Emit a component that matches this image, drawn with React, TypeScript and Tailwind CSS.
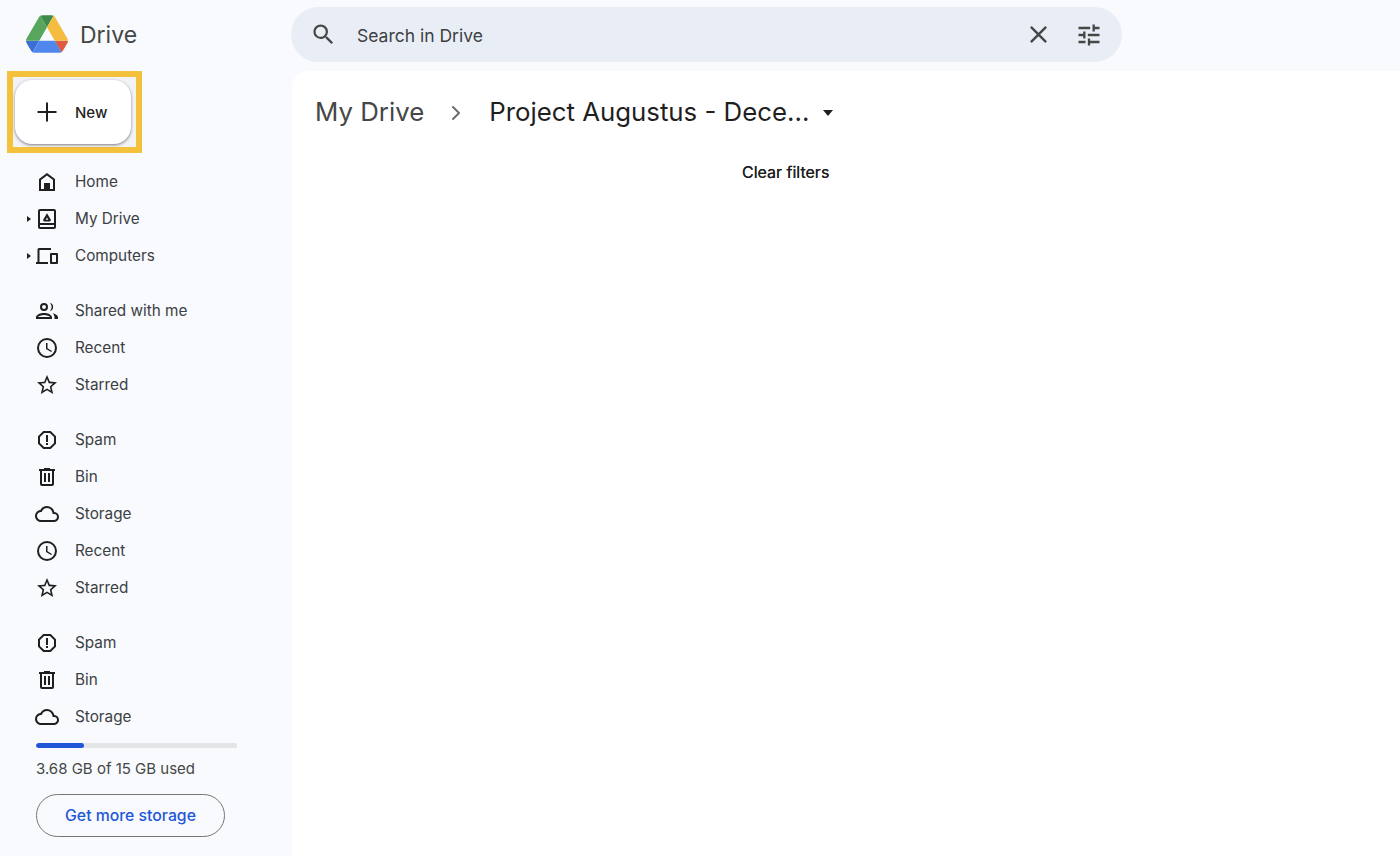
import React from 'react';
import { Plus, ChevronRight } from 'lucide-react';

const DriveLogo = () => (
  <svg viewBox="0 0 87.3 78" className="w-[42px] h-[38px]">
    <path d="m6.6 66.85 3.85 6.65c.8 1.4 1.95 2.5 3.3 3.3l13.75-23.8h-27.5c0 1.55.4 3.1 1.2 4.5z" fill="#3b6fd4" />
    <path d="m43.65 25-13.75-23.8c-1.35.8-2.5 1.9-3.3 3.3l-25.4 44a9.06 9.06 0 0 0 -1.2 4.5h27.5z" fill="#58a65c" />
    <path d="m73.55 76.8c1.35-.8 2.5-1.9 3.3-3.3l1.6-2.75 7.65-13.25c.8-1.4 1.2-2.95 1.2-4.5h-27.502l5.852 11.5z" fill="#df5a42" />
    <path d="m43.65 25 13.75-23.8c-1.35-.8-2.9-1.2-4.5-1.2h-18.5c-1.6 0-3.15.45-4.5 1.2z" fill="#3d8a4b" />
    <path d="m59.8 53h-32.3l-13.75 23.8c1.35.8 2.9 1.2 4.5 1.2h50.8c1.6 0 3.15-.45 4.5-1.2z" fill="#4f87ec" />
    <path d="m73.4 26.5-12.7-22c-.8-1.4-1.95-2.5-3.3-3.3l-13.75 23.8 16.15 28h27.45c0-1.55-.4-3.1-1.2-4.5z" fill="#f4bd41" />
  </svg>
);

const iconClass = 'w-6 h-6 fill-[#1f1f1f]';

const HomeIcon = () => (
  <svg viewBox="0 0 24 24" className={iconClass}>
    <path d="M12 3 4 9v12h16V9l-8-6zm6 16h-3v-6H9v6H6v-9l6-4.5 6 4.5v9z" />
  </svg>
);

const MyDriveIcon = () => (
  <svg viewBox="0 0 24 24" className={iconClass}>
    <path d="M19 2H5a2 2 0 0 0-2 2v16a2 2 0 0 0 2 2h14a2 2 0 0 0 2-2V4a2 2 0 0 0-2-2zm0 18H5v-2h14v2zm0-4H5V4h14v12z" />
    <path d="M12 6.2 8 13l1 1.6h6l1-1.6-4-6.8zm-1.3 6.6 1.3-2.4 1.3 2.4h-2.6z" />
  </svg>
);

const ComputersIcon = () => (
  <svg viewBox="0 0 24 24" className="w-6 h-6 fill-[#1f1f1f] overflow-visible">
    <path d="M1 20v-2h1.500V5.500A1.500 1.500 0 0 1 4 4h12v2H4.500v12H13v2H1z" />
    <path d="M16 9h6a1 1 0 0 1 1 1v9a1 1 0 0 1-1 1h-6a1 1 0 0 1-1-1v-9a1 1 0 0 1 1-1zm1 2v7h4v-7h-4z" />
  </svg>
);

const SharedIcon = () => (
  <svg viewBox="0 0 24 24" className="w-6 h-6 fill-[#1f1f1f] overflow-visible">
    <path d="M9 12a4 4 0 1 0 0-8 4 4 0 0 0 0 8zm0-6a2 2 0 1 1 0 4 2 2 0 0 1 0-4z" />
    <path d="M9 14c-3.200 0-8 1.500-8 4.300V20h16v-1.700C17 15.500 12.200 14 9 14zm-6 4.100C3.400 17 6.400 16 9 16s5.600 1 6 2.100H3z" />
    <path d="M15 4.100a4 4 0 0 1 0 7.800 6 6 0 0 0 0-7.800z" />
    <path d="M17.500 14.200c2.500.6 5.500 1.800 5.500 4.100V20h-3.500v-1.700c0-1.700-.8-3-2-4.100z" />
  </svg>
);

const RecentIcon = () => (
  <svg viewBox="0 0 24 24" className={iconClass}>
    <path d="M12 2a10 10 0 1 0 0 20 10 10 0 0 0 0-20zm0 18a8 8 0 1 1 0-16 8 8 0 0 1 0 16z" />
    <path d="M12.500 7H11v6l5.200 3.100.8-1.200-4.500-2.700V7z" />
  </svg>
);

const StarIcon = () => (
  <svg viewBox="0 0 24 24" className={iconClass}>
    <path d="M22 9.240l-7.190-.62L12 2 9.190 8.630 2 9.240l5.460 4.730L5.820 21 12 17.270 18.180 21l-1.630-7.030L22 9.240zM12 15.400l-3.760 2.270 1-4.280-3.320-2.880 4.380-.38L12 6.100l1.710 4.040 4.380.38-3.320 2.880 1 4.280L12 15.400z" />
  </svg>
);

const SpamIcon = () => (
  <svg viewBox="0 0 24 24" className={iconClass}>
    <path d="M15.730 3H8.270L3 8.270v7.460L8.270 21h7.460L21 15.730V8.270L15.730 3zM19 14.900 14.900 19H9.100L5 14.900V9.100L9.100 5h5.800L19 9.100v5.800z" />
    <path d="M11 7h2v7h-2zM11 15h2v2h-2z" />
  </svg>
);

const BinIcon = () => (
  <svg viewBox="0 0 24 24" className={iconClass}>
    <path d="M15 4V3H9v1H4v2h1v13a2 2 0 0 0 2 2h10a2 2 0 0 0 2-2V6h1V4h-5zm2 15H7V6h10v13z" />
    <path d="M9 8h2v9H9zM13 8h2v9h-2z" />
  </svg>
);

const CloudIcon = () => (
  <svg viewBox="0 0 24 24" className="w-6 h-6 fill-[#1f1f1f] overflow-visible">
    <path d="M19.350 10.040A7.490 7.490 0 0 0 12 4C9.110 4 6.600 5.640 5.350 8.040A5.994 5.994 0 0 0 0 14c0 3.310 2.690 6 6 6h13c2.760 0 5-2.240 5-5 0-2.640-2.050-4.780-4.650-4.960zM19 18H6c-2.210 0-4-1.790-4-4 0-2.050 1.530-3.760 3.560-3.970l1.070-.11.500-.950A5.469 5.469 0 0 1 12 6c2.620 0 4.880 1.860 5.390 4.430l.300 1.500 1.530.110A2.980 2.980 0 0 1 22 15c0 1.650-1.350 3-3 3z" />
  </svg>
);

const SearchIcon = () => (
  <svg viewBox="0 0 24 24" className="w-[27px] h-[27px] fill-[#444746]">
    <path d="M15.500 14h-.790l-.280-.270A6.471 6.471 0 0 0 16 9.500 6.500 6.500 0 1 0 9.500 16c1.610 0 3.090-.590 4.230-1.570l.270.280v.790l5 4.990L20.490 19l-4.990-5zm-6 0C7.010 14 5 11.990 5 9.500S7.010 5 9.500 5 14 7.010 14 9.500 11.990 14 9.500 14z" />
  </svg>
);

const CloseIcon = () => (
  <svg viewBox="0 0 24 24" className="w-[29px] h-[29px] fill-[#444746]">
    <path d="M19 6.410 17.590 5 12 10.590 6.410 5 5 6.410 10.590 12 5 17.590 6.410 19 12 13.410 17.590 19 19 17.590 13.410 12z" />
  </svg>
);

const TuneIcon = () => (
  <svg viewBox="0 0 24 24" className="w-[28px] h-[28px] fill-[#444746]">
    <path d="M3 17v2h6v-2H3zM3 5v2h10V5H3zm10 16v-2h8v-2h-8v-2h-2v6h2zM7 9v2H3v2h4v2h2V9H7zm14 4v-2H11v2h10zm-6-4h2V7h4V5h-4V3h-2v6z" />
  </svg>
);

const NavRow = ({ icon, label, arrow }: { icon: React.ReactNode; label: string; arrow?: boolean }) => (
  <div className="relative flex items-center h-[37px] pl-[35px]">
    {arrow && <span className="absolute left-[27px] w-0 h-0 border-y-[3.5px] border-y-transparent border-l-[4px] border-l-[#1f1f1f]" />}
    <span className="w-6 h-6 flex items-center justify-center">{icon}</span>
    <span className="ml-[16px] mt-px text-[15.3px] text-[#3c4043]">{label}</span>
  </div>
);

const App = () => {
  return (
    <div className="flex w-[1400px] h-[856px] overflow-hidden bg-[#f8fafd] font-['Inter','Roboto',sans-serif]">
      <aside className="w-[292px] shrink-0 flex flex-col">
        <div className="flex items-center h-[71px] pl-[26px] pb-[4px]">
          <DriveLogo />
          <span className="ml-[12px] mt-[4px] text-[23px] text-[#444746]">Drive</span>
        </div>
        <div className="ml-[7px] w-[135px] h-[82px] border-[6px] border-[#f4c13d] pt-[3px] pl-[2px] bg-[#f1f3f6]">
          <button className="flex items-center w-[116px] h-[64px] rounded-[17px] bg-white shadow-[0_1px_2px_rgba(0,0,0,0.3),0_1px_3px_1px_rgba(0,0,0,0.15)] pl-[17px]">
            <Plus size={30} strokeWidth={1.6} className="text-[#1f1f1f]" />
            <span className="ml-[13px] mt-[2px] text-[15px] font-[450] text-[#1f1f1f]">New</span>
          </button>
        </div>
        <nav className="mt-[10px] flex flex-col">
          <NavRow icon={<HomeIcon />} label="Home" />
          <NavRow icon={<MyDriveIcon />} label="My Drive" arrow />
          <NavRow icon={<ComputersIcon />} label="Computers" arrow />
          <div className="h-[18px]" />
          <NavRow icon={<SharedIcon />} label="Shared with me" />
          <NavRow icon={<RecentIcon />} label="Recent" />
          <NavRow icon={<StarIcon />} label="Starred" />
          <div className="h-[18px]" />
          <NavRow icon={<SpamIcon />} label="Spam" />
          <NavRow icon={<BinIcon />} label="Bin" />
          <NavRow icon={<CloudIcon />} label="Storage" />
          <NavRow icon={<RecentIcon />} label="Recent" />
          <NavRow icon={<StarIcon />} label="Starred" />
          <div className="h-[18px]" />
          <NavRow icon={<SpamIcon />} label="Spam" />
          <NavRow icon={<BinIcon />} label="Bin" />
          <NavRow icon={<CloudIcon />} label="Storage" />
        </nav>
        <div className="pl-[36px] mt-[8px]">
          <div className="flex w-[201px] h-[5px] rounded-full bg-[#e4e5e7] overflow-hidden">
            <div className="w-[48px] h-full rounded-full bg-[#1f57d6]" />
          </div>
          <p className="mt-[11px] text-[15px] leading-[20px] text-[#444746]">3.68 GB of 15 GB used</p>
          <button className="mt-[15px] w-[189px] h-[43px] rounded-full border border-[#747775] text-[15.8px] font-medium text-[#1f57d6]">
            Get more storage
          </button>
        </div>
      </aside>

      <div className="flex-1 flex flex-col min-w-0">
        <div className="h-[71px] shrink-0 pt-[7px]">
          <div className="flex items-center w-[831px] -ml-px h-[55px] rounded-full bg-[#e9eef6] pl-[19px] pr-[19px]">
            <SearchIcon />
            <span className="ml-[20px] mt-[3px] text-[17.5px] text-[#3c4043]">Search in Drive</span>
            <span className="ml-auto"><CloseIcon /></span>
            <span className="ml-[22px]"><TuneIcon /></span>
          </div>
        </div>
        <main className="flex-1 bg-white rounded-tl-[16px] pl-[23px]">
          <div className="flex items-center h-[83px]">
            <span className="text-[25.8px] text-[#444746]">My Drive</span>
            <ChevronRight size={24} strokeWidth={2} className="ml-[20px] mt-px text-[#6b6e70]" />
            <span className="ml-[21px] text-[25.8px] text-[#1f1f1f]">Project Augustus - Dece...</span>
            <span className="ml-[14px] mt-px w-0 h-0 border-x-[5.5px] border-x-transparent border-t-[6px] border-t-[#1f1f1f]" />
          </div>
          <div className="pl-[427px] text-[16px] leading-[20px] text-[#1f1f1f] mt-[8px] [text-shadow:0_0_0.3px_#1f1f1f]">Clear filters</div>
        </main>
      </div>
    </div>
  );
};

export default App;
